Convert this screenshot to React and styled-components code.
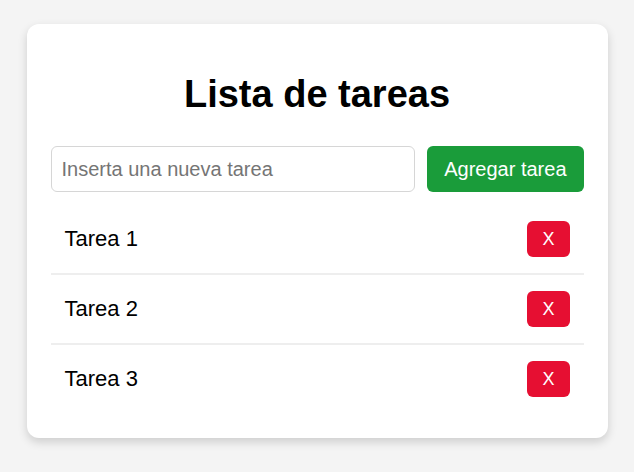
import React from "react";
import styled, { createGlobalStyle } from "styled-components";

const Global = createGlobalStyle`
  html, body { margin: 0; padding: 0; background: #f4f4f4; }
  body { font-family: "Liberation Sans", Arial, sans-serif; }
  #root { padding: 24px 0 40px; }
`;

const Card = styled.div`
  box-sizing: border-box;
  width: 581px;
  margin: 0 auto;
  background: #ffffff;
  border-radius: 12px;
  box-shadow: 0 4px 10px rgba(0, 0, 0, 0.16);
  padding: 24px 24px 25px;
`;

const Title = styled.h1`
  margin: 25px 0 30px;
  text-align: center;
  font-size: 38px;
  font-weight: 700;
  color: #000;
`;

const Form = styled.div`
  display: flex;
  gap: 12px;
  height: 46px;
`;

const Input = styled.input`
  flex: 1;
  box-sizing: border-box;
  height: 46px;
  border: 1px solid #d6d6d6;
  border-radius: 6px;
  padding: 0 10px;
  font-family: inherit;
  font-size: 20px;
  color: #000;
  outline: none;
  &::placeholder { color: #757575; }
`;

const Button = styled.button`
  height: 46px;
  border: none;
  border-radius: 6px;
  padding: 0 17px;
  font-family: inherit;
  font-size: 20px;
  color: #fff;
  background: ${(p) => p.$bg};
  cursor: pointer;
  white-space: nowrap;
`;

const DeleteButton = styled(Button)`
  height: 36px;
  padding: 0 15px;
  font-size: 18px;
`;

const List = styled.ul`
  list-style: none;
  margin: 13px 0 0;
  padding: 0;
`;

const Row = styled.li`
  display: flex;
  align-items: center;
  justify-content: space-between;
  padding: 16px 14px;
  border-bottom: 2px solid #eeeeee;
  font-size: 22px;
  color: #000;
  &:last-child { border-bottom: none; }
`;

export default function App() {
  const tasks = ["Tarea 1", "Tarea 2", "Tarea 3"];
  return (
    <>
      <Global />
      <Card>
        <Title>Lista de tareas</Title>
        <Form>
          <Input placeholder="Inserta una nueva tarea" />
          <Button $bg="#1a9c3a">Agregar tarea</Button>
        </Form>
        <List>
          {tasks.map((t) => (
            <Row key={t}>
              <span>{t}</span>
              <DeleteButton $bg="#e60f32">X</DeleteButton>
            </Row>
          ))}
        </List>
      </Card>
    </>
  );
}
